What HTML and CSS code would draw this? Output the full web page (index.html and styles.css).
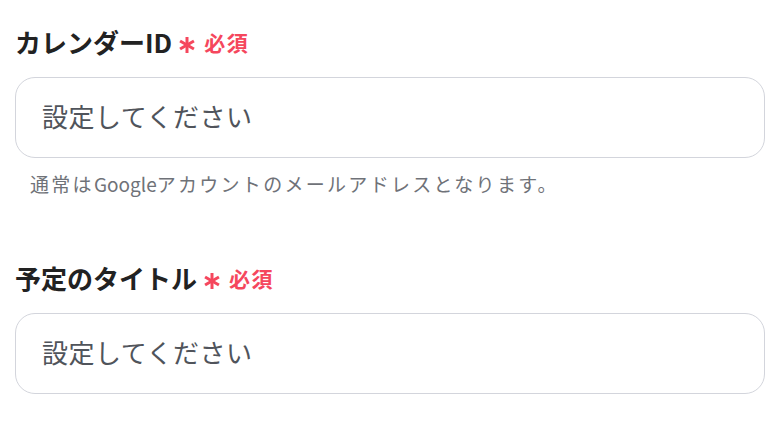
FILE: index.html
```html
<!DOCTYPE html>
<html lang="ja">
<head>
<meta charset="utf-8">
<title>フォーム</title>
<link rel="stylesheet" href="styles.css">
</head>
<body>
<div class="form">
  <div class="group">
    <div class="label">
      <span class="label-text">カレンダーID</span>
      <svg class="req-mark" viewBox="0 0 16 16" width="16" height="16" aria-hidden="true">
        <g stroke="#f5475d" stroke-width="3" stroke-linecap="butt">
          <line x1="8" y1="0" x2="8" y2="16"/>
          <line x1="1.07" y1="4" x2="14.93" y2="12"/>
          <line x1="1.07" y1="12" x2="14.93" y2="4"/>
        </g>
      </svg>
      <span class="req">必須</span>
    </div>
    <input class="field" type="text" placeholder="設定してください">
    <p class="hint">通常は<span class="latin">Google</span>アカウントのメールアドレスとなります。</p>
  </div>
  <div class="group group-2">
    <div class="label">
      <span class="label-text">予定のタイトル</span>
      <svg class="req-mark" viewBox="0 0 16 16" width="16" height="16" aria-hidden="true">
        <g stroke="#f5475d" stroke-width="3" stroke-linecap="butt">
          <line x1="8" y1="0" x2="8" y2="16"/>
          <line x1="1.07" y1="4" x2="14.93" y2="12"/>
          <line x1="1.07" y1="12" x2="14.93" y2="4"/>
        </g>
      </svg>
      <span class="req">必須</span>
    </div>
    <input class="field" type="text" placeholder="設定してください">
  </div>
</div>
</body>
</html>
```

FILE: styles.css
```css
html, body {
  margin: 0;
  padding: 0;
  background: #ffffff;
}

body {
  font-family: "Noto Sans CJK JP", "Noto Sans", sans-serif;
  color: #222222;
}

.form {
  display: flex;
  flex-direction: column;
  padding: 26px 13px 0 15px;
}

.group {
  display: flex;
  flex-direction: column;
}

.group-2 {
  margin-top: 66px;
}

.label {
  display: flex;
  align-items: center;
  height: 32px;
}

.label-text {
  font-size: 26px;
  font-weight: 700;
  line-height: 32px;
  color: #222222;
}

.req-mark {
  margin-left: 7px;
  margin-top: 6px;
  flex: none;
}

.req {
  margin-left: 9px;
  font-size: 21px;
  font-weight: 700;
  letter-spacing: 1.5px;
  color: #f5475d;
  line-height: 32px;
}

.field {
  box-sizing: border-box;
  margin-top: 19px;
  width: 750px;
  height: 81px;
  border: 1px solid #d3d5dc;
  border-radius: 20px;
  padding: 0 26px 5px;
  background: #ffffff;
  font-family: "Noto Sans CJK JP", "Noto Sans", sans-serif;
  font-size: 26px;
  letter-spacing: 0.5px;
  color: #333333;
  outline: none;
}

.field::placeholder {
  color: #50545b;
  opacity: 1;
}

.hint {
  margin: 14px 0 0 15px;
  font-size: 19px;
  line-height: 24px;
  letter-spacing: 2.3px;
  color: #6f7278;
}

.hint .latin {
  letter-spacing: 0;
}
```
